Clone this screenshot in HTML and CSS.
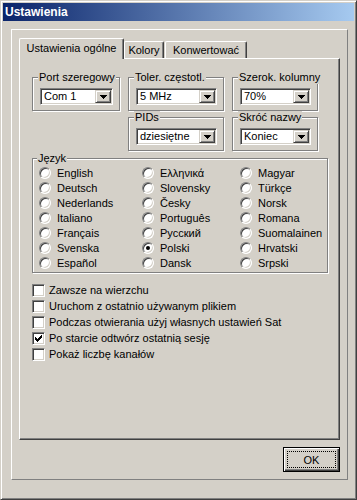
FILE: index.html
```html
<!DOCTYPE html>
<html lang="pl">
<head>
<meta charset="utf-8">
<title>Ustawienia</title>
<link rel="stylesheet" href="styles.css">
</head>
<body>
<div class="window">
  <div class="titlebar">Ustawienia</div>
  <div class="panel">
    <div class="tabs">
      <div class="tab tab-general active">Ustawienia ogólne</div>
      <div class="tab tab-colors">Kolory</div>
      <div class="tab tab-convert">Konwertować</div>
    </div>
    <div class="page">
      <div class="combos">
        <fieldset class="grp">
          <legend>Port szeregowy</legend>
          <div class="combo"><span class="combo-text">Com 1</span><span class="combo-btn"><svg width="7" height="4" viewBox="0 0 7 4" shape-rendering="crispEdges"><path d="M0 0h7v1h-1v1h-1v1h-1v1h-1v-1h-1v-1h-1v-1h-1z" fill="#000"/></svg></span></div>
        </fieldset>
        <fieldset class="grp">
          <legend>Toler. częstotl.</legend>
          <div class="combo"><span class="combo-text">5 MHz</span><span class="combo-btn"><svg width="7" height="4" viewBox="0 0 7 4" shape-rendering="crispEdges"><path d="M0 0h7v1h-1v1h-1v1h-1v1h-1v-1h-1v-1h-1v-1h-1z" fill="#000"/></svg></span></div>
        </fieldset>
        <fieldset class="grp">
          <legend>Szerok. kolumny</legend>
          <div class="combo"><span class="combo-text">70%</span><span class="combo-btn"><svg width="7" height="4" viewBox="0 0 7 4" shape-rendering="crispEdges"><path d="M0 0h7v1h-1v1h-1v1h-1v1h-1v-1h-1v-1h-1v-1h-1z" fill="#000"/></svg></span></div>
        </fieldset>
        <fieldset class="grp col2">
          <legend>PIDs</legend>
          <div class="combo"><span class="combo-text">dziesiętne</span><span class="combo-btn"><svg width="7" height="4" viewBox="0 0 7 4" shape-rendering="crispEdges"><path d="M0 0h7v1h-1v1h-1v1h-1v1h-1v-1h-1v-1h-1v-1h-1z" fill="#000"/></svg></span></div>
        </fieldset>
        <fieldset class="grp col3">
          <legend>Skróć nazwy</legend>
          <div class="combo"><span class="combo-text">Koniec</span><span class="combo-btn"><svg width="7" height="4" viewBox="0 0 7 4" shape-rendering="crispEdges"><path d="M0 0h7v1h-1v1h-1v1h-1v1h-1v-1h-1v-1h-1v-1h-1z" fill="#000"/></svg></span></div>
        </fieldset>
      </div>

      <fieldset class="grp lang">
        <legend>Język</legend>
        <div class="lang-grid">
          <div class="opt"><span class="radio"></span>English</div>
          <div class="opt"><span class="radio"></span>Deutsch</div>
          <div class="opt"><span class="radio"></span>Nederlands</div>
          <div class="opt"><span class="radio"></span>Italiano</div>
          <div class="opt"><span class="radio"></span>Français</div>
          <div class="opt"><span class="radio"></span>Svenska</div>
          <div class="opt"><span class="radio"></span>Español</div>
          <div class="opt"><span class="radio"></span>Ελληνικά</div>
          <div class="opt"><span class="radio"></span>Slovensky</div>
          <div class="opt"><span class="radio"></span>Česky</div>
          <div class="opt"><span class="radio"></span>Português</div>
          <div class="opt"><span class="radio"></span>Русский</div>
          <div class="opt"><span class="radio on"></span>Polski</div>
          <div class="opt"><span class="radio"></span>Dansk</div>
          <div class="opt"><span class="radio"></span>Magyar</div>
          <div class="opt"><span class="radio"></span>Türkçe</div>
          <div class="opt"><span class="radio"></span>Norsk</div>
          <div class="opt"><span class="radio"></span>Romana</div>
          <div class="opt"><span class="radio"></span>Suomalainen</div>
          <div class="opt"><span class="radio"></span>Hrvatski</div>
          <div class="opt"><span class="radio"></span>Srpski</div>
        </div>
      </fieldset>

      <div class="checks">
        <div class="check-row"><span class="checkbox"></span>Zawsze na wierzchu</div>
        <div class="check-row"><span class="checkbox"></span>Uruchom z ostatnio używanym plikiem</div>
        <div class="check-row"><span class="checkbox"></span>Podczas otwierania użyj własnych ustawień Sat</div>
        <div class="check-row"><span class="checkbox"><svg width="7" height="7" viewBox="0 0 7 7" shape-rendering="crispEdges"><path d="M6 0h1v1h-1zM5 1h2v1h-2zM0 2h1v1h-1zM4 2h3v1h-3zM0 3h2v1h-2zM3 3h3v1h-3zM0 4h5v1h-5zM1 5h3v1h-3zM2 6h1v1h-1z" fill="#000"/></svg></span>Po starcie odtwórz ostatnią sesję</div>
        <div class="check-row"><span class="checkbox"></span>Pokaż liczbę kanałów</div>
      </div>
    </div>
    <div class="actions">
      <button class="ok" type="button"><span class="focus">OK</span></button>
    </div>
  </div>
</div>
</body>
</html>
```
FILE: styles.css
```css
* { box-sizing: border-box; }

body {
  margin: 0;
  font-family: "Liberation Sans", Arial, sans-serif;
  font-size: 11px;
  color: #000;
  background: #d4d0c8;
}

.window {
  width: 357px;
  height: 500px;
  background: #d4d0c8;
  border: 1px solid;
  border-color: #d4d0c8 #404040 #404040 #d4d0c8;
  box-shadow: inset 1px 1px 0 #fff, inset -1px -1px 0 #808080;
  padding: 2px;
  display: flex;
  flex-direction: column;
}

.titlebar {
  height: 18px;
  background: linear-gradient(to right, #0a246a, #a6caf0);
  color: #fff;
  font-weight: bold;
  font-size: 12px;
  line-height: 18px;
  padding-left: 2px;
}

.panel {
  margin: 8px 6px 0 8px;
  border: 1px solid;
  border-color: #fff #808080 #808080 #fff;
  padding: 8px 7px 7px 7px;
}

.tabs {
  display: flex;
  align-items: flex-end;
  height: 20px;
}

.tab {
  height: 17px;
  border: 1px solid;
  border-bottom: 0;
  border-color: #fff #404040 #fff #fff;
  border-radius: 2px 2px 0 0;
  box-shadow: inset -1px 0 0 #808080;
  padding-top: 2px;
  line-height: 13px;
  text-align: center;
  white-space: nowrap;
}

.tab-general { width: 105px; }
.tab-colors { width: 40px; }
.tab-convert { width: 82px; margin-left: 1px; }

.tab.active {
  height: 21px;
  margin-bottom: -1px;
  position: relative;
  z-index: 1;
  background: #d4d0c8;
  padding-top: 3px;
}

.page {
  height: 382px;
  border: 1px solid;
  border-color: #fff #404040 #404040 #fff;
  box-shadow: inset -1px -1px 0 #808080;
  padding: 12px 0 0 12px;
}

.combos {
  display: grid;
  grid-template-columns: 88px 96px 86px;
  column-gap: 8px;
}

.col2 { grid-column: 2; }
.col3 { grid-column: 3; }

.grp {
  margin: 0;
  min-width: 0;
  padding: 4px 6px 5px 7px;
  border: 1px solid #808080;
  box-shadow: inset 1px 1px 0 #fff, 1px 1px 0 #fff;
}

.grp legend {
  padding: 0 1px;
  margin-left: -2px;
  line-height: 13px;
  background: #d4d0c8;
  white-space: nowrap;
}

.combo {
  display: flex;
  width: 100%;
  height: 17px;
  background: #fff;
  border: 1px solid;
  border-color: #808080 #fff #fff #808080;
  box-shadow: inset 1px 1px 0 #404040, inset -1px -1px 0 #d4d0c8;
  padding: 1px;
}

.combo-text {
  flex: 1;
  padding-left: 2px;
  line-height: 13px;
  white-space: nowrap;
  overflow: hidden;
}

.combo-btn {
  width: 16px;
  height: 13px;
  flex: none;
  background: #d4d0c8;
  border: 1px solid;
  border-color: #d4d0c8 #404040 #404040 #d4d0c8;
  box-shadow: inset 1px 1px 0 #fff, inset -1px -1px 0 #808080;
  display: flex;
  align-items: center;
  justify-content: center;
}

.combo-btn svg { display: block; }

.lang {
  width: 296px;
  margin-top: 1px;
  padding: 0 6px 2px 6px;
}

.lang-grid {
  display: grid;
  grid-template-rows: repeat(7, 15px);
  grid-auto-flow: column;
  grid-template-columns: 103px 98px 1fr;
}

.opt {
  display: flex;
  align-items: center;
  white-space: nowrap;
}

.radio {
  width: 12px;
  height: 12px;
  flex: none;
  margin-right: 6px;
  border-radius: 50%;
  background: #fff;
  border: 1px solid;
  border-color: #808080 #fff #fff #808080;
  box-shadow: inset 1px 1px 0 #404040, inset -1px -1px 0 #d4d0c8;
  display: flex;
  align-items: center;
  justify-content: center;
}

.radio.on::after {
  content: "";
  width: 4px;
  height: 4px;
  border-radius: 50%;
  background: #000;
}

.checks {
  margin-top: 9px;
  display: flex;
  flex-direction: column;
}

.check-row {
  display: flex;
  align-items: center;
  height: 16px;
  white-space: nowrap;
}

.checkbox {
  width: 13px;
  height: 13px;
  flex: none;
  margin-right: 4px;
  background: #fff;
  border: 1px solid;
  border-color: #808080 #fff #fff #808080;
  box-shadow: inset 1px 1px 0 #404040, inset -1px -1px 0 #d4d0c8;
  padding: 2px;
}

.checkbox svg { display: block; }

.actions {
  display: flex;
  justify-content: flex-end;
  margin-top: 7px;
}

.ok {
  width: 57px;
  height: 25px;
  margin: 0;
  padding: 3px;
  font: inherit;
  color: #000;
  background: #d4d0c8;
  border: 1px solid #000;
  box-shadow: inset 1px 1px 0 #fff, inset -1px -1px 0 #404040, inset -2px -2px 0 #808080;
  display: flex;
}

.focus {
  flex: 1;
  border: 1px dotted #000;
  display: flex;
  align-items: center;
  justify-content: center;
}
```
